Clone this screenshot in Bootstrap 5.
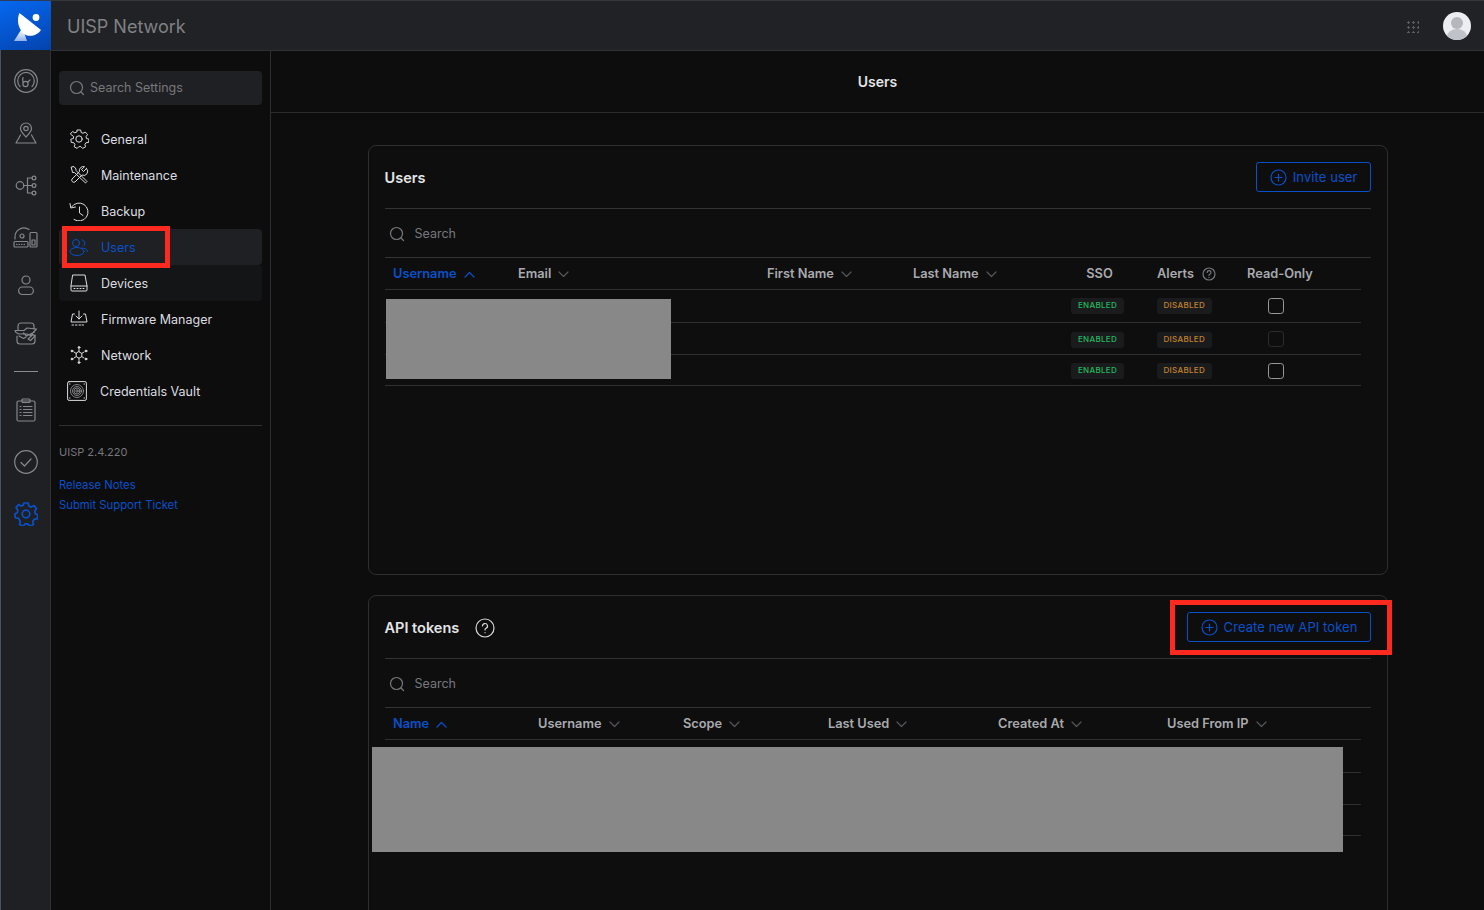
<!DOCTYPE html>
<html lang="en">

<head>
    <title>UISP Network - Users</title>
    <meta charset="utf-8">
    <meta name="viewport" content="width=device-width, initial-scale=1">
    <link href="https://cdn.jsdelivr.net/npm/bootstrap@5.3.2/dist/css/bootstrap.min.css" rel="stylesheet">
    <style>
        html, body { height: 100%; }
        body { background: #0d0d0e; color: #d8d9db; font-family: "Inter", "Liberation Sans", sans-serif; font-size: 12.5px; overflow: hidden; }
        svg { display: block; flex: none; fill: none; stroke: currentColor; stroke-width: 1.2; stroke-linecap: round; stroke-linejoin: round; }

        .app-rail { width: 51px; height: 910px; background: #1f2023; border-left: 1px solid #47536a; border-right: 1px solid #303134; color: #85878c; }
        .rail-logo { width: 51px; height: 50px; margin-left: -1px; align-self: flex-start; background: linear-gradient(160deg, #0668f0, #0443ad); border-top: 1px solid #2f3b55; position: relative; z-index: 1; }
        .logo-mark { stroke: none; }
        .logo-dot { stroke: none; fill: #fff; }
        .rail-stack { padding-top: 5px; }
        .rail-icon { height: 52px; width: 100%; }
        .rail-icon.short { height: 44px; }
        .rail-rule { width: 24px; height: 1px; background: #8a8c90; margin: 12px auto; }
        .rail-gear { color: #0a50c8; stroke-width: 1.7; }
        .app-top { height: 51px; background: #212225; border-top: 1px solid #36373a; border-bottom: 1px solid #303134; padding: 2px 13px 0 16px; }
        .app-title { font-size: 18px; color: #808184; }
        .top-tools { gap: 24px; }
        .grid-dots { width: 12px; height: 12px; background-image: radial-gradient(circle, #5b5c60 1.1px, transparent 1.3px); background-size: 5px 5px; background-position: -1px -1px; }
        .avatar-svg { stroke: none; margin-top: -2px; }
        .app-side { width: 220px; height: 859px; flex: none; border-right: 1px solid #2c2d30; padding: 20px 8px 0; }
        .side-search { height: 34px; background: #1f2023; border-radius: 4px; padding-left: 10px; color: #77787c; gap: 5px; }
        .side-list { margin-top: 16px; }
        .side-item { height: 36px; padding-left: 10px; color: #dcdde0; gap: 12px; text-decoration: none; border-radius: 4px; }
        .side-item span { padding-top: 2px; }
        .side-item svg { stroke-width: 1; }
        .side-item.on { background: #1f2023; color: #0a50c8; }
        .side-item.soft { background: #141516; }
        .side-item.vault { padding-left: 8px; gap: 13px; }
        .vault-fine { stroke-width: .8; opacity: .7; }
        .side-rule { border-top: 1px solid #2f3033; margin-top: 16px; }
        .side-ver { color: #77787c; font-size: 11px; margin-top: 18px; }
        .side-links { margin-top: 14px; }
        .side-link { display: block; color: #0a50c8; font-size: 11.3px; text-decoration: none; line-height: 20px; }
        .red-frame { position: absolute; border: 5px solid #ff2a1f; pointer-events: none; }
        .red-users { left: 3px; top: 105px; width: 108px; height: 42px; }
        .red-token { left: 801px; top: 4px; width: 222px; height: 55px; }

        .main-head { height: 62px; border-bottom: 1px solid #2c2d30; font-size: 14px; font-weight: 600; color: #e4e5e7; }
        .pane-wrap { padding-top: 32px; gap: 20px; }
        .pane { width: 1020px; height: 430px; background: #0e0e0f; border: 1px solid #2e2f31; border-radius: 8px; padding: 0 16px; flex: none; }
        .pane-head { height: 63px; border-bottom: 1px solid #333437; font-size: 14.5px; font-weight: 600; color: #e4e5e7; }
        .pane-name { padding-top: 1px; }
        .name-help { gap: 16px; }
        .help-icon { color: #d8d9db; }
        .btn-plus { height: 30px; padding: 1px 12px 0 13px; display: flex; align-items: center; gap: 6px; font-size: 13px; letter-spacing: .08px; --bs-btn-color: #0a50c8; --bs-btn-border-color: #0a50c8; --bs-btn-border-radius: 3px; }
        .pane-find { height: 49px; border-bottom: 1px solid #333437; padding: 1px 0 0 4px; color: #77787c; gap: 10px; }
        .pane-find span { padding-top: 2px; }
        .grid-tbl { table-layout: fixed; width: 976px; margin: 0; font-size: 12.8px; --bs-table-bg: transparent; --bs-table-color: #b3b4b7; --bs-table-border-color: #2f3033; }
        .grid-tbl th { height: 31px; padding: 0 8px 0 8.5px; vertical-align: middle; font-weight: 600; color: #a9aaad; white-space: nowrap; }
        .grid-tbl td { height: 32px; padding: 0 8px; vertical-align: middle; }
        .grid-tbl tbody tr:first-child td { height: 33px; }
        .grid-tbl tbody tr:nth-child(n+2) td { padding-top: 2px; }
        .grid-tbl tbody tr:last-child td { height: 31px; }
        .grid-tbl th svg { display: inline-block; margin-left: 7px; vertical-align: 0; color: #55565a; }
        .grid-tbl th.sorted, .grid-tbl th.sorted svg { color: #0a50c8; }
        .grid-tbl th .info-mark { margin-left: 8px; vertical-align: -3px; color: #77787c; }
        .grid-tbl th.sso-head { padding-left: 12px; }
        .cols-users col:nth-child(1) { width: 125px; }
        .cols-users col:nth-child(2) { width: 249px; }
        .cols-users col:nth-child(3) { width: 146px; }
        .cols-users col:nth-child(4) { width: 142px; }
        .cols-users col:nth-child(5) { width: 102px; }
        .cols-users col:nth-child(6) { width: 90px; }
        .cols-api col:nth-child(-n+3) { width: 145px; }
        .cols-api col:nth-child(4) { width: 170px; }
        .cols-api col:nth-child(5) { width: 169px; }
        .state-tag { display: inline-block; height: 16px; font-size: 8px; font-weight: 500; letter-spacing: .3px; background: #1a1b1c; border-radius: 3px; padding: 0 7px; line-height: 15px; vertical-align: middle; }
        .state-on { color: #22b85f; }
        .state-off { color: #c4822f; }
        .tick { width: 16px; height: 16px; margin: 0 0 0 21px; background-color: transparent; border: 1px solid #98999d; border-radius: 4px; display: block; }
        .tick:disabled { opacity: 1; border-color: #2b2c2e; }
        .hide-box { position: absolute; background: #888; }
        .hide-users { left: 17px; top: 153px; width: 285px; height: 80px; }
        .hide-api { left: 3px; top: 151px; width: 971px; height: 105px; }
    </style>
</head>

<body>
    <div class="d-flex">
        <!-- left rail -->
        <nav class="app-rail d-flex flex-column align-items-center">
            <div class="rail-logo d-flex align-items-center justify-content-center">
                <svg class="logo-mark" width="50" height="50" viewBox="0 0 50 50">
                    <defs><linearGradient id="logoFade" x1="0" y1="0" x2="0" y2="1"><stop offset="0" stop-color="#fff"/><stop offset="1" stop-color="#8fb0ee"/></linearGradient></defs>
                    <path fill="url(#logoFade)" d="M13 40 L20 29 L23 31 L26 40Z"/>
                    <path fill="#fff" d="M18.500 12 L40 29 C36 35 27 37 22 32 C17 27 15.500 18 18.500 12Z"/>
                    <circle class="logo-dot" cx="35" cy="16.500" r="3.400"/>
                </svg>
            </div>
            <div class="rail-stack d-flex flex-column w-100">
                <div class="rail-icon d-flex align-items-center justify-content-center">
                    <svg width="24" height="24" viewBox="0 0 24 24"><circle cx="12" cy="12" r="11.300"/><path d="M6 17.500A8.300 8.300 0 1 1 18 17.500"/><circle cx="11.500" cy="15" r="2.600"/><path d="M9.300 13.500C8.500 12 8.500 10 9 8.500M13.500 13.300l2.500-2.300"/></svg>
                </div>
                <div class="rail-icon d-flex align-items-center justify-content-center">
                    <svg width="22" height="22" viewBox="0 0 22 22"><path d="M11 15C8 11.500 5.500 9.500 5.500 6.500a5.500 5.500 0 0 1 11 0c0 3-2.500 5-5.500 8.500Z"/><circle cx="11" cy="6.500" r="2.200"/><path d="M5.500 13 1 21h20l-4.500-8"/></svg>
                </div>
                <div class="rail-icon d-flex align-items-center justify-content-center">
                    <svg width="22" height="21" viewBox="0 0 22 21"><circle cx="5" cy="10.500" r="3.800"/><circle cx="19" cy="3" r="1.900"/><circle cx="19" cy="10.500" r="1.900"/><circle cx="19" cy="18" r="1.900"/><path d="M8.800 10.500h8.300M12.500 3h4.600M12.500 18h4.600M12.500 3v15"/></svg>
                </div>
                <div class="rail-icon d-flex align-items-center justify-content-center">
                    <svg width="25" height="23" viewBox="0 0 25 23"><path d="M2 13V11a9 9 0 0 1 14-7.500"/><circle cx="9" cy="10" r="2"/><rect x="1" y="15.500" width="14" height="5.500" rx="1"/><path d="M3.500 18.300h.5M6 18.300h.5M8.500 18.300h.5M11 18.300h.5"/><rect x="17" y="6.500" width="7" height="14.500" rx="1"/><rect x="19" y="14" width="3" height="5"/></svg>
                </div>
                <div class="rail-icon short d-flex align-items-center justify-content-center">
                    <svg width="18" height="22" viewBox="0 0 18 22"><circle cx="9" cy="6" r="4"/><rect x="1.600" y="13" width="14.800" height="7.500" rx="3.700"/></svg>
                </div>
                <div class="rail-icon d-flex align-items-center justify-content-center">
                    <svg width="24" height="23" viewBox="0 0 24 23"><path d="M4 8V4a3 3 0 0 1 3-3h10a3 3 0 0 1 3 3v3M3 14v5a3 3 0 0 0 3 3h12a3 3 0 0 0 3-3v-6"/><path d="M1 8.500h9l3-2.500 9.500 1-6 6.500-3.500-1.500H5l-3-1.500zM5 14l4.500 2.500 2.500-1.500M9.500 11l3 3 8-4M14 17l5-4.500 2 1.500-4.500 4.500z"/></svg>
                </div>
                <div class="rail-rule"></div>
                <div class="rail-icon d-flex align-items-center justify-content-center">
                    <svg width="20" height="24" viewBox="0 0 20 24"><rect x="1" y="3" width="18" height="20" rx="1.500"/><rect x="6" y="1" width="8" height="3.500" rx="1"/><path d="M4 8.500h1M7.500 8.500H16M4 11.500h1M7.500 11.500H16M4 14.500h1M7.500 14.500H16M4 17.500h1M7.500 17.500H16"/></svg>
                </div>
                <div class="rail-icon d-flex align-items-center justify-content-center">
                    <svg width="24" height="24" viewBox="0 0 24 24"><circle cx="12" cy="12" r="11.300"/><path d="M7 12.500l3.500 3.500 6.500-7"/></svg>
                </div>
                <div class="rail-icon d-flex align-items-center justify-content-center">
                    <svg class="rail-gear" width="24" height="24" viewBox="0 0 24 24"><path d="M9.800 1h4.400l.6 3 2.500 1.100 2.700-1.500 2.600 3-1.800 2.500.5 2.700 2.600 1.200-.7 3.900-3 .3-1.500 2.300.8 3-3.600 1.700-2-2.300h-2.800l-2 2.300-3.600-1.700.8-3L4.400 16.200l-3-.3-.7-3.900 2.600-1.200.5-2.700L2 5.600l2.600-3 2.700 1.500 2-.9z"/><circle cx="12" cy="12" r="3.800"/></svg>
                </div>
            </div>
        </nav>

        <div class="flex-grow-1 d-flex flex-column">
            <!-- top bar -->
            <header class="app-top d-flex align-items-center justify-content-between">
                <div class="app-title">UISP Network</div>
                <div class="top-tools d-flex align-items-center">
                    <div class="grid-dots"></div>
                    <svg class="avatar-svg" width="28" height="28" viewBox="0 0 28 28">
                        <defs><clipPath id="avatarClip"><circle cx="14" cy="14" r="14"/></clipPath></defs>
                        <circle cx="14" cy="14" r="14" fill="#eceef2"/>
                        <g clip-path="url(#avatarClip)"><circle cx="14" cy="11" r="6" fill="#b4b7bd"/><ellipse cx="14" cy="25" rx="10" ry="8" fill="#bfc2c8"/></g>
                    </svg>
                </div>
            </header>

            <div class="d-flex">
                <!-- settings menu -->
                <aside class="app-side">
                    <div class="side-search d-flex align-items-center">
                        <svg width="16" height="16" viewBox="0 0 16 16"><circle cx="7.500" cy="7.500" r="6"/><path d="M12 12l2.500 2.500"/></svg>
                        <span>Search Settings</span>
                    </div>
                    <div class="side-list position-relative">
                        <a class="side-item d-flex align-items-center" href="#">
                            <svg width="20" height="20" viewBox="0 0 20 20"><path d="M8.300 1h3.400l.5 2.500 1.800.8 2.200-1.300 2.300 2.500-1.400 2.100.4 1.900 2.500.7-.5 3.300-2.500.2-1.100 1.700.7 2.400-3 1.600-1.700-1.800h-2l-1.700 1.800-3-1.600.7-2.400-1.100-1.700-2.500-.2-.5-3.300 2.500-.7.400-1.900L1.300 5l2.300-2.500L5.800 3.800l1.900-.8z"/><circle cx="10" cy="10" r="3.200"/></svg>
                            <span>General</span>
                        </a>
                        <a class="side-item d-flex align-items-center" href="#">
                            <svg width="20" height="20" viewBox="0 0 20 20"><path d="M17.500 3.500l-3 3-2-2 3-2.800a4 4 0 0 0-5 5L3 14a2.200 2.200 0 0 0 3 3l7-7a4 4 0 0 0 4.500-6.500zM2.500 2l2.500-.5 2 2.500v1.500L18 16.500 16.500 18 5.500 7.500H4z"/></svg>
                            <span>Maintenance</span>
                        </a>
                        <a class="side-item d-flex align-items-center" href="#">
                            <svg width="20" height="20" viewBox="0 0 20 20"><path d="M2.500 6A9 9 0 1 1 5 18.500M1 2.500 1.800 7l4.700-1M10.500 6v6l3.500 2.500"/></svg>
                            <span>Backup</span>
                        </a>
                        <a class="side-item on d-flex align-items-center" href="#">
                            <svg width="20" height="20" viewBox="0 0 20 20"><circle cx="7" cy="6" r="3.500"/><path d="M13 2.800a3.500 3.500 0 0 1 2 5.800M13 11c3 0 5.500 1.500 5.500 3.500"/><ellipse cx="8" cy="14.500" rx="7" ry="4"/></svg>
                            <span>Users</span>
                        </a>
                        <a class="side-item soft d-flex align-items-center" href="#">
                            <svg width="20" height="20" viewBox="0 0 20 20"><path d="M4 2h12l2 11v4a1 1 0 0 1-1 1H3a1 1 0 0 1-1-1v-4zM2 13h16M5 15.500h1M8 15.500h1M11 15.500h1M14 15.500h1"/></svg>
                            <span>Devices</span>
                        </a>
                        <a class="side-item d-flex align-items-center" href="#">
                            <svg width="20" height="20" viewBox="0 0 20 20"><path d="M10 2v8M7 7l3 3 3-3M5.500 5H3.500l-1.500 8h16l-1.500-8h-2M3 16h1.500M6.500 16H8M10 16h1.500M13 16h1.500"/></svg>
                            <span>Firmware Manager</span>
                        </a>
                        <a class="side-item d-flex align-items-center" href="#">
                            <svg width="20" height="20" viewBox="0 0 20 20"><path d="M10 6.800l2.800 1.600v3.200L10 13.200l-2.800-1.600V8.400z"/><circle cx="10" cy="2.500" r=".9" fill="currentColor"/><circle cx="10" cy="17.500" r=".9" fill="currentColor"/><circle cx="3" cy="6" r=".9" fill="currentColor"/><circle cx="17" cy="6" r=".9" fill="currentColor"/><circle cx="3" cy="14" r=".9" fill="currentColor"/><circle cx="17" cy="14" r=".9" fill="currentColor"/><path d="M10 4.500v2.300M10 13.200v2.300M5 7l2.200 1.400M15 7l-2.200 1.400M5 13l2.200-1.400M15 13l-2.200-1.400"/></svg>
                            <span>Network</span>
                        </a>
                        <a class="side-item vault d-flex align-items-center" href="#">
                            <svg width="20" height="20" viewBox="0 0 20 20"><rect x=".6" y=".6" width="18.800" height="18.800" rx="1.500"/><g class="vault-fine"><circle cx="10" cy="10" r="6.500"/><circle cx="10" cy="10" r="4.500"/><circle cx="10" cy="10" r="3"/><circle cx="10" cy="10" r="1.200"/></g><path d="M2.500 3h.5M17 3h.5M2.500 17h.5M17 17h.5"/></svg>
                            <span>Credentials Vault</span>
                        </a>
                        <div class="red-frame red-users"></div>
                    </div>
                    <div class="side-rule"></div>
                    <div class="side-ver">UISP 2.4.220</div>
                    <div class="side-links">
                        <a class="side-link" href="#">Release Notes</a>
                        <a class="side-link" href="#">Submit Support Ticket</a>
                    </div>
                </aside>

                <!-- page -->
                <main class="flex-grow-1">
                    <div class="main-head d-flex align-items-center justify-content-center">Users</div>

                    <div class="pane-wrap d-flex flex-column align-items-center">
                        <section class="pane position-relative">
                            <div class="pane-head d-flex align-items-center justify-content-between">
                                <span class="pane-name">Users</span>
                                <button class="btn btn-outline-primary btn-plus" type="button">
                                    <svg width="17" height="17" viewBox="0 0 17 17"><circle cx="8.500" cy="8.500" r="7.500"/><path d="M8.500 5v7M5 8.500h7"/></svg>
                                    Invite user
                                </button>
                            </div>
                            <div class="pane-find d-flex align-items-center">
                                <svg width="16" height="16" viewBox="0 0 16 16"><circle cx="7.500" cy="7.500" r="6"/><path d="M12 12l2.500 2.500"/></svg>
                                <span>Search</span>
                            </div>
                            <table class="table grid-tbl">
                                <colgroup class="cols-users"><col><col><col><col><col><col><col></colgroup>
                                <thead>
                                    <tr>
                                        <th class="sorted">Username<svg width="11" height="7" viewBox="0 0 11 7"><path d="M1 6l4.500-4.500L10 6"/></svg></th>
                                        <th>Email<svg width="11" height="7" viewBox="0 0 11 7"><path d="M1 1l4.500 4.500L10 1"/></svg></th>
                                        <th>First Name<svg width="11" height="7" viewBox="0 0 11 7"><path d="M1 1l4.500 4.500L10 1"/></svg></th>
                                        <th>Last Name<svg width="11" height="7" viewBox="0 0 11 7"><path d="M1 1l4.500 4.500L10 1"/></svg></th>
                                        <th class="sso-head text-center">SSO</th>
                                        <th>Alerts<svg class="info-mark" width="14" height="14" viewBox="0 0 14 14"><circle cx="7" cy="7" r="6"/><path d="M5.200 5.500a1.900 1.900 0 1 1 2.600 1.700c-.6.300-.8.700-.8 1.300M7 10.300v.2"/></svg></th>
                                        <th>Read-Only</th>
                                    </tr>
                                </thead>
                                <tbody>
                                    <tr><td></td><td></td><td></td><td></td><td class="text-center"><span class="state-tag state-on">ENABLED</span></td><td><span class="state-tag state-off">DISABLED</span></td><td><input class="form-check-input tick" type="checkbox"></td></tr>
                                    <tr><td></td><td></td><td></td><td></td><td class="text-center"><span class="state-tag state-on">ENABLED</span></td><td><span class="state-tag state-off">DISABLED</span></td><td><input class="form-check-input tick" type="checkbox" disabled></td></tr>
                                    <tr><td></td><td></td><td></td><td></td><td class="text-center"><span class="state-tag state-on">ENABLED</span></td><td><span class="state-tag state-off">DISABLED</span></td><td><input class="form-check-input tick" type="checkbox"></td></tr>
                                </tbody>
                            </table>
                            <div class="hide-box hide-users"></div>
                        </section>

                        <section class="pane position-relative">
                            <div class="pane-head d-flex align-items-center justify-content-between">
                                <span class="pane-name name-help d-flex align-items-center">API tokens
                                    <svg class="help-icon" width="20" height="20" viewBox="0 0 20 20"><circle cx="10" cy="10" r="9"/><path d="M7.500 8a2.500 2.500 0 1 1 3.500 2.300c-.7.300-1 .8-1 1.700M10 14.500v.2"/></svg>
                                </span>
                                <button class="btn btn-outline-primary btn-plus" type="button">
                                    <svg width="17" height="17" viewBox="0 0 17 17"><circle cx="8.500" cy="8.500" r="7.500"/><path d="M8.500 5v7M5 8.500h7"/></svg>
                                    Create new API token
                                </button>
                            </div>
                            <div class="pane-find d-flex align-items-center">
                                <svg width="16" height="16" viewBox="0 0 16 16"><circle cx="7.500" cy="7.500" r="6"/><path d="M12 12l2.500 2.500"/></svg>
                                <span>Search</span>
                            </div>
                            <table class="table grid-tbl">
                                <colgroup class="cols-api"><col><col><col><col><col><col></colgroup>
                                <thead>
                                    <tr>
                                        <th class="sorted">Name<svg width="11" height="7" viewBox="0 0 11 7"><path d="M1 6l4.500-4.500L10 6"/></svg></th>
                                        <th>Username<svg width="11" height="7" viewBox="0 0 11 7"><path d="M1 1l4.500 4.500L10 1"/></svg></th>
                                        <th>Scope<svg width="11" height="7" viewBox="0 0 11 7"><path d="M1 1l4.500 4.500L10 1"/></svg></th>
                                        <th>Last Used<svg width="11" height="7" viewBox="0 0 11 7"><path d="M1 1l4.500 4.500L10 1"/></svg></th>
                                        <th>Created At<svg width="11" height="7" viewBox="0 0 11 7"><path d="M1 1l4.500 4.500L10 1"/></svg></th>
                                        <th>Used From IP<svg width="11" height="7" viewBox="0 0 11 7"><path d="M1 1l4.500 4.500L10 1"/></svg></th>
                                    </tr>
                                </thead>
                                <tbody>
                                    <tr><td></td><td></td><td></td><td></td><td></td><td></td></tr>
                                    <tr><td></td><td></td><td></td><td></td><td></td><td></td></tr>
                                    <tr><td></td><td></td><td></td><td></td><td></td><td></td></tr>
                                </tbody>
                            </table>
                            <div class="hide-box hide-api"></div>
                            <div class="red-frame red-token"></div>
                        </section>
                    </div>
                </main>
            </div>
        </div>
    </div>

    <script src="https://cdn.jsdelivr.net/npm/bootstrap@5.3.2/dist/js/bootstrap.bundle.min.js"></script>
</body>

</html>
